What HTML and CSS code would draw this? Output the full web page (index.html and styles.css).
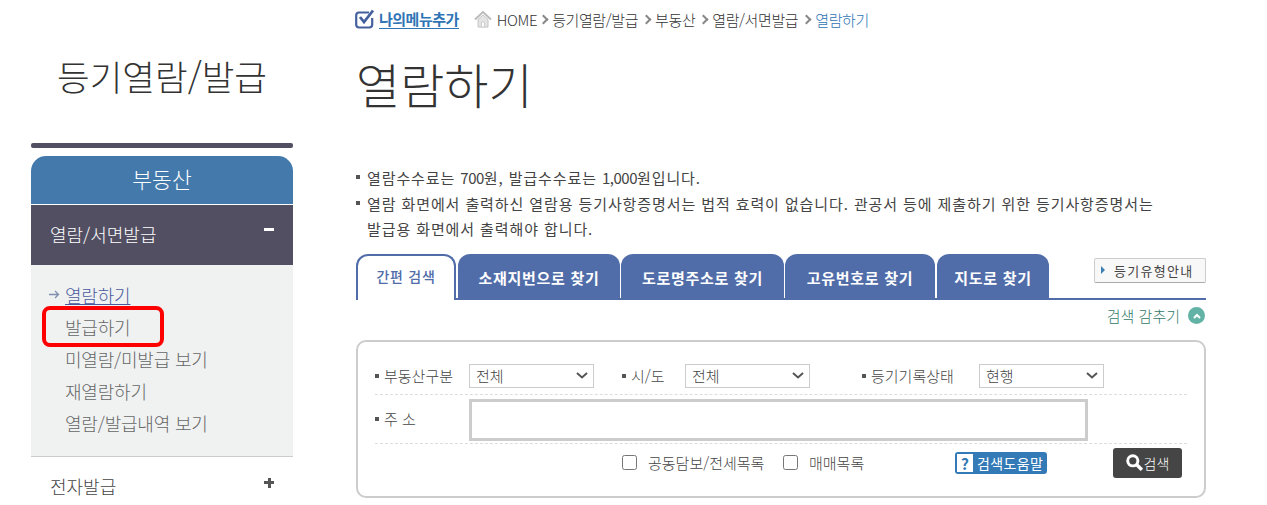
FILE: index.html
```html
<!DOCTYPE html>
<html lang="ko">
<head>
  <meta charset="UTF-8" />
  <title>열람하기</title>
  <link rel="stylesheet" href="styles.css">
</head>
<body>
  <div class="page">
    <aside class="sidebar">
      <h2 class="side-title">등기열람/발급</h2>
      <div class="side-bar"></div>
      <div class="side-head">부동산</div>
      <div class="side-group">
        <span>열람/서면발급</span>
        <i class="minus"></i>
      </div>
      <ul class="side-list">
        <li class="current">
          <svg class="arrow" width="11" height="9" viewBox="0 0 11 9"><path d="M0 4.500h9M6 1l3.500 3.500L6 8" fill="none" stroke="#7f8fb0" stroke-width="1.300"/></svg>
          <a href="#">열람하기</a>
        </li>
        <li class="marked">발급하기<span class="red-box"></span></li>
        <li>미열람/미발급 보기</li>
        <li>재열람하기</li>
        <li>열람/발급내역 보기</li>
      </ul>
      <div class="side-other">
        <span>전자발급</span>
        <i class="plus"></i>
      </div>
    </aside>

    <main class="content">
      <div class="topbar">
        <a class="mymenu" href="#">
          <svg width="20" height="20" viewBox="0 0 20 20"><path d="M14 3.500H4Q1.200 3.500 1.200 6.500v9q0 3 3 3h10q3 0 3-3V9" fill="none" stroke="#44609f" stroke-width="2.200"/><path d="M5 8l4 5L18 1.500" fill="none" stroke="#44609f" stroke-width="2.800"/></svg>
          <span>나의메뉴추가</span>
        </a>
        <div class="crumbs">
          <svg width="18" height="18" viewBox="0 0 18 18"><path d="M1 9.500L9 2l8 7.500" fill="none" stroke="#bbb" stroke-width="2"/><path d="M4 9.500L9 5l5 4.500V17H4z" fill="#e4e4e4" stroke="#c4c4c4"/><path d="M7.500 12h3v5h-3z" fill="#fff" stroke="#ccc"/></svg>
          <span class="crumb-home">HOME</span>
          <b class="sep"></b><span>등기열람/발급</span>
          <b class="sep"></b><span>부동산</span>
          <b class="sep"></b><span>열람/서면발급</span>
          <b class="sep"></b><span class="crumb-now">열람하기</span>
        </div>
      </div>

      <h1>열람하기</h1>

      <ul class="notice">
        <li>열람수수료는 <span class="num">700</span>원, 발급수수료는 <span class="num">1,000</span>원입니다.</li>
        <li>열람 화면에서 출력하신 열람용 등기사항증명서는 법적 효력이 없습니다. 관공서 등에 제출하기 위한 등기사항증명서는<br>발급용 화면에서 출력해야 합니다.</li>
      </ul>

      <div class="tabs">
        <a class="tab active" href="#">간편 검색</a>
        <a class="tab t1" href="#">소재지번으로 찾기</a>
        <a class="tab t2" href="#">도로명주소로 찾기</a>
        <a class="tab t3" href="#">고유번호로 찾기</a>
        <a class="tab t4" href="#">지도로 찾기</a>
        <a class="type-guide" href="#"><i></i>등기유형안내</a>
      </div>

      <div class="fold">
        <span>검색 감추기</span>
        <i class="fold-btn"><svg width="8" height="6" viewBox="0 0 8 6"><path d="M1 5l3-3 3 3" fill="none" stroke="#fff" stroke-width="2"/></svg></i>
      </div>

      <form class="search-box">
        <div class="row row-selects">
          <label class="lbl l1">부동산구분</label>
          <select><option>전체</option></select>
          <label class="lbl l2">시/도</label>
          <select><option>전체</option></select>
          <label class="lbl l3">등기기록상태</label>
          <select><option>현행</option></select>
        </div>
        <div class="row row-addr">
          <label class="lbl l1">주 소</label>
          <input type="text" class="addr" />
        </div>
        <div class="row-actions">
          <label class="chk c1"><input type="checkbox" />공동담보/전세목록</label>
          <label class="chk c2"><input type="checkbox" />매매목록</label>
          <a class="help" href="#"><i>?</i>검색도움말</a>
          <button type="button" class="go">
            <svg width="17" height="17" viewBox="1 1 15 15"><circle cx="7" cy="7" r="4.500" fill="none" stroke="#fff" stroke-width="2.600"/><path d="M10.500 10.500L15 15" stroke="#fff" stroke-width="3"/></svg>
            검색
          </button>
        </div>
      </form>
    </main>
  </div>
</body>
</html>
```

FILE: styles.css
```css
html,
body {
  height: 505px;
  overflow: hidden;
}

body {
  margin: 0;
  background: #fff;
  color: #555;
  font-family: "Noto Sans CJK KR", "Liberation Sans", sans-serif;
  font-size: 14px;
}

ul {
  list-style: none;
  margin: 0;
  padding: 0;
}

a {
  text-decoration: none;
}

.page {
  display: flex;
  align-items: flex-start;
  padding-left: 31px;
}

/* left menu */
.sidebar {
  width: 262px;
  margin-right: 63px;
}

.side-title {
  margin: 52px 0 0;
  height: 91px;
  font-size: 35.500px;
  line-height: 48px;
  font-weight: 300;
  color: #333;
  text-align: center;
}

.side-bar {
  height: 5px;
  background: #524f63;
  border-radius: 2px;
  margin-bottom: 8px;
}

.side-head {
  height: 48px;
  line-height: 46px;
  background: #4479ac;
  border-radius: 15px 15px 0 0;
  color: #fff;
  font-size: 21.500px;
  font-weight: 300;
  text-align: center;
  margin-bottom: 1px;
}

.side-group {
  height: 60px;
  background: #524f63;
  color: #fff;
  font-size: 18px;
  font-weight: 300;
  line-height: 58px;
  padding: 0 19px;
  display: flex;
  justify-content: space-between;
}

.minus {
  width: 10px;
  height: 3px;
  margin-top: 23px;
  background: #fff;
}

.side-list {
  height: 163px;
  padding: 14px 0 14px;
  background: #f0f2f2;
  border-bottom: 1px solid #ccc;
  font-size: 18px;
  font-weight: 300;
  letter-spacing: -0.200px;
  color: #666;
}

.side-list li {
  position: relative;
  height: 32.100px;
  line-height: 32px;
  padding-left: 34px;
}

.side-list .current a {
  color: #4a5a9e;
  text-decoration: underline;
}

.arrow {
  position: absolute;
  left: 18px;
  top: 11px;
}

.red-box {
  position: absolute;
  left: 11px;
  top: -5px;
  width: 114px;
  height: 33px;
  border: 4px solid #f00;
  border-radius: 8px;
}

.side-other {
  display: flex;
  justify-content: space-between;
  padding: 15px 19px 0;
  font-size: 18px;
  font-weight: 300;
  line-height: 28px;
  color: #444;
}

.plus {
  position: relative;
  width: 10px;
  height: 3px;
  margin-top: 9px;
  background: #555;
}

.plus::after {
  content: "";
  position: absolute;
  left: 3.500px;
  top: -3.500px;
  width: 3px;
  height: 10px;
  background: #555;
}

/* main column */
.content {
  width: 850px;
}

.topbar {
  display: flex;
  align-items: center;
  height: 20px;
  margin-top: 9px;
}

.mymenu {
  display: flex;
  align-items: center;
  gap: 4px;
  margin: 0 15px 0 -1px;
}

.mymenu span {
  color: #2f74b5;
  font-size: 15px;
  font-weight: 700;
  letter-spacing: -0.500px;
  border-bottom: 1px solid #2f74b5;
  line-height: 18px;
}

.crumbs {
  display: flex;
  align-items: center;
  font-size: 15px;
  font-weight: 300;
  color: #333;
  letter-spacing: -0.400px;
}

.crumb-home {
  margin: 0 -2px 0 5px;
}

.crumb-now {
  color: #2f74b5;
}

.sep {
  width: 5px;
  height: 5px;
  margin: 0 5px;
  border-top: 2px solid #888;
  border-right: 2px solid #888;
  transform: rotate(45deg);
}

h1 {
  margin: 24px 0 0;
  height: 60px;
  font-size: 48px;
  line-height: 60px;
  font-weight: 300;
  color: #333;
}

.notice {
  margin-top: 52px;
  color: #444;
  font-size: 15px;
  letter-spacing: 0.900px;
  line-height: 25.500px;
}

.notice li {
  position: relative;
  padding-left: 11px;
}

.notice li::before {
  content: "";
  position: absolute;
  left: 0;
  top: 10px;
  width: 4px;
  height: 4px;
  background: #555;
}

.num {
  letter-spacing: -0.500px;
}

.tabs {
  display: flex;
  position: relative;
  height: 44px;
  margin-top: 12px;
  border-bottom: 2px solid #516da9;
}

.tab {
  height: 45px;
  line-height: 47px;
  margin-right: 1px;
  background: #516da9;
  border-radius: 12px 12px 0 0;
  color: #fff;
  font-size: 15px;
  letter-spacing: 0.700px;
  font-weight: 700;
  text-align: center;
}

.tab.active {
  width: 96px;
  height: 44px;
  margin: 0 2px -2px 0;
  background: #fff;
  border: 2px solid #516da9;
  border-bottom: 0;
  color: #516da9;
  font-size: 14px;
  font-weight: 500;
  line-height: 40px;
}

.t1 { width: 162px; }
.t2 { width: 163px; }
.t3 { width: 150px; margin-right: 2px; }
.t4 { width: 112px; }

.type-guide {
  position: absolute;
  right: 0;
  top: 4px;
  width: 110px;
  height: 23px;
  border: 1px solid #ccc;
  border-bottom-color: #aaa;
  border-radius: 2px;
  background: #f8f8f8;
  color: #444;
  font-size: 13px;
  letter-spacing: 1.300px;
  display: flex;
  align-items: center;
}

.type-guide i {
  width: 0;
  height: 0;
  margin: 0 9px 0 6px;
  border-left: 4px solid #3b7fb5;
  border-top: 4px solid transparent;
  border-bottom: 4px solid transparent;
}

.fold {
  display: flex;
  justify-content: flex-end;
  align-items: center;
  gap: 8px;
  height: 32px;
  color: #2f7a68;
  font-size: 15px;
  font-weight: 300;
}

.fold-btn {
  display: flex;
  align-items: center;
  justify-content: center;
  width: 17px;
  height: 17px;
  margin-right: 1px;
  border-radius: 50%;
  background: #62b3a6;
}

.search-box {
  width: 850px;
  box-sizing: border-box;
  height: 158px;
  margin-top: 8px;
  padding: 21px 17px 0;
  border: 2px solid #ccc;
  border-radius: 10px;
  font-weight: 300;
  color: #444;
}

.row {
  display: flex;
  align-items: center;
  border-bottom: 1px dashed #ddd;
}

.row-selects {
  height: 26px;
  padding-bottom: 5px;
}

.lbl {
  position: relative;
  padding-left: 9px;
  font-size: 15px;
  box-sizing: border-box;
}

.lbl::before {
  content: "";
  position: absolute;
  left: 0;
  top: 9px;
  width: 4px;
  height: 4px;
  background: #555;
}

.l1 { width: 94px; }
.l2 { width: 63px; margin-left: 28px; }
.l3 { width: 117px; margin-left: 52px; }

select {
  appearance: none;
  width: 125px;
  height: 24px;
  border: 1px solid #ccc;
  background: #fff url("data:image/svg+xml,%3Csvg xmlns='http://www.w3.org/2000/svg' width='12' height='7'%3E%3Cpath d='M1 1l5 4.500 5-4.500' fill='none' stroke='%23555' stroke-width='2'/%3E%3C/svg%3E") no-repeat right 5px center;
  color: #444;
  font-family: inherit;
  font-size: 15px;
  font-weight: 300;
  padding-left: 6px;
  border-radius: 0;
}

.row-addr {
  height: 46px;
  padding-top: 2px;
}

.row-addr .lbl {
  margin-top: -3px;
}

.addr {
  width: 619px;
  height: 42px;
  box-sizing: border-box;
  border: 3px solid #ccc;
  outline: none;
}

.row-actions {
  position: relative;
  height: 39px;
}

.chk {
  position: absolute;
  top: 8px;
  display: flex;
  align-items: center;
  font-size: 15px;
}

.chk input {
  width: 15px;
  height: 15px;
  margin: 0 11px 0 0;
}

.c1 { left: 247px; }
.c2 { left: 408px; }

.help {
  position: absolute;
  left: 580px;
  top: 8px;
  display: flex;
  align-items: center;
  width: 92px;
  height: 22px;
  background: #337ab7;
  border-radius: 3px;
  color: #fff;
  font-size: 14px;
  font-weight: 400;
  letter-spacing: 0.400px;
}

.help i {
  width: 16px;
  height: 18px;
  margin: 0 4px 0 2px;
  background: #fff;
  color: #337ab7;
  font-size: 16px;
  font-style: normal;
  font-weight: 700;
  line-height: 18px;
  text-align: center;
}

.go {
  position: absolute;
  left: 738px;
  top: 4px;
  display: flex;
  align-items: center;
  justify-content: center;
  gap: 1px;
  width: 69px;
  height: 30px;
  border: 0;
  border-radius: 3px;
  background: #454545;
  color: #fff;
  font-family: inherit;
  font-size: 14px;
  font-weight: 300;
  padding: 0;
}
```
